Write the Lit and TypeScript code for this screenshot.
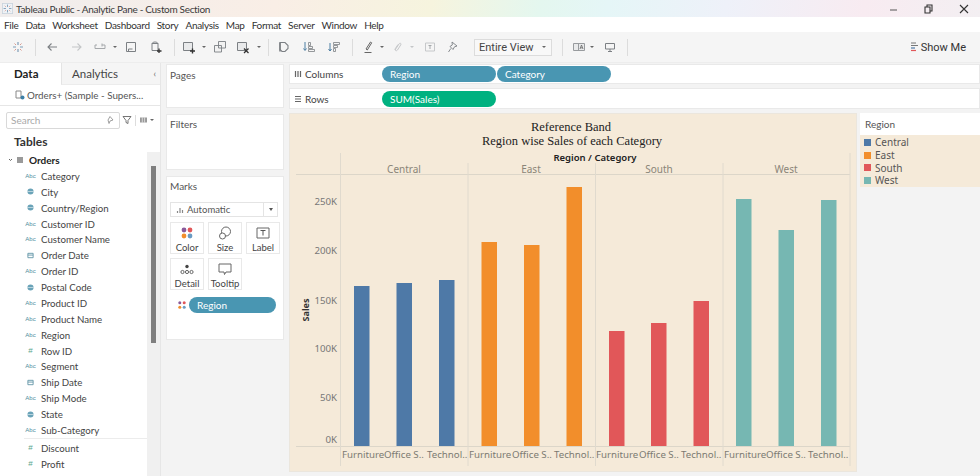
import { LitElement, html, css, svg } from "lit";
import { customElement } from "lit/decorators.js";

const G = "#7c8084";
const ic: Record<string, any> = {
  logo: svg`<g stroke="#7f9db8" stroke-width="1.2"><path d="M7 2v3M7 9v3M2 7h3M9 7h3"/></g><g stroke="#d99a8f" stroke-width="1"><path d="M3.5 3.5l1.5 1.5M9 9l1.5 1.5M10.5 3.5L9 5M5 9l-1.5 1.5"/></g>`,
  back: svg`<path d="M12 7H3M6.5 3.5L3 7l3.5 3.5" fill="none" stroke="${G}" stroke-width="1.1"/>`,
  fwd: svg`<path d="M2 7h9M7.5 3.5L11 7l-3.5 3.5" fill="none" stroke="#c4c6c8" stroke-width="1.1"/>`,
  loop: svg`<path d="M9 5h3v3.500H2V5h2M9 3.500V6.500" fill="none" stroke="#a5a8ab" stroke-width="1"/>`,
  save: svg`<path d="M2.500 2.500h9v9h-9zM4.500 11.500V9h4" fill="none" stroke="${G}" stroke-width="1"/>`,
  newds: svg`<path d="M3 3.500h6v7H3zM3 3.500c1-2 5-2 6 0" fill="none" stroke="${G}"/><path d="M10 8.500v4.500M8 11h4.500" stroke="#333" stroke-width="1.300"/>`,
  sheet: svg`<path d="M1.500 2.500h9v8h-9z" fill="#e9eaeb" stroke="${G}"/><path d="M10.500 8.500v5M8 11h5" stroke="#333" stroke-width="1.400"/>`,
  dup: svg`<path d="M5.500 1.500h7v6.500h-7z M1.500 5.500h7v6.500h-7z" fill="#f2f2f2" stroke="${G}" stroke-width=".9"/>`,
  clear: svg`<path d="M1.500 2.500h9v8h-9z" fill="#e9eaeb" stroke="${G}"/><path d="M8 8.500l4.500 4.500M12.500 8.500L8 13" stroke="#333" stroke-width="1.300"/>`,
  swap: svg`<path d="M3 2.500h5l3 3v3l-3 3H5l-2-2z" fill="none" stroke="${G}" stroke-width="1.100"/><path d="M3 2.500v9" stroke="${G}" stroke-width="1.600"/>`,
  sort1: svg`<path d="M3 2v8M1.500 8.500L3 10.500 4.500 8.500" fill="none" stroke="#4d7ea3"/><path d="M6.500 2.500h2v3h-2zM6.500 6.500h4v2h-4zM6.500 9.500h6v2h-6z" fill="none" stroke="${G}" stroke-width=".8"/>`,
  sort2: svg`<path d="M3 3v8M1.500 9L3 11 4.500 9" fill="none" stroke="#4d7ea3"/><path d="M6.500 2.500h6v2h-6zM6.500 5.500h4v2h-4zM6.500 8.500h2v3h-2z" fill="none" stroke="${G}" stroke-width=".8"/>`,
  pen: svg`<path d="M5 9l4.500-7 1.200.800L6.300 10zM3.500 12.500h7" fill="none" stroke="#666" stroke-width="1"/>`,
  clip: svg`<path d="M5 10l4-6c1-1.500 2.500-.500 1.800.800L7.500 10c-1 1.500-3 .500-2.300-1.200L8 4.500" fill="none" stroke="#c6c8ca" stroke-width="1"/>`,
  tbox: svg`<path d="M2.500 3h9v8h-9z" fill="none" stroke="#c6c8ca"/><path d="M5.500 5.500h3M7 5.500v3.500" stroke="#a5a8ab"/>`,
  pin: svg`<path d="M6 2l5 4-2.500.800-1.500 2.700-3-3 2.300-1.500zM4.800 8.500L2.500 12" fill="none" stroke="${G}" stroke-width=".9"/>`,
  fit: svg`<path d="M1.500 3.500h11v7h-11z" fill="#e9eaeb" stroke="#989b9e"/><path d="M6.500 3.500v7" stroke="#989b9e"/><path d="M8 9l1.500-4 1.500 4M8.600 7.800h1.800" fill="none" stroke="#666" stroke-width=".8"/>`,
  present: svg`<path d="M2.500 3.500h9v5.500h-9zM7 9v2.500M5 11.500h4" fill="none" stroke="${G}" stroke-width="1"/>`,
};

const tools: [number, string][] = [
  [18, "logo"], [35, "|"], [52, "back"], [77, "fwd"], [100, "loop"], [115, "."], [131, "save"], [156, "newds"], [174, "|"],
  [189, "sheet"], [204, "."], [220, "dup"], [243, "clear"], [259, "."], [268, "|"], [284, "swap"], [309, "sort1"], [334, "sort2"],
  [352, "|"], [368, "pen"], [382, "."], [397, "clip"], [412, ".l"], [430, "tbox"], [453, "pin"],
];
const tools2: [number, string][] = [[562, "|"], [579, "fit"], [592, "."], [610, "present"], [627, "|"]];

const fields: [string, string][] = [
  ["abc", "Category"], ["geo", "City"], ["geo", "Country/Region"], ["abc", "Customer ID"], ["abc", "Customer Name"],
  ["cal", "Order Date"], ["abc", "Order ID"], ["geo", "Postal Code"], ["abc", "Product ID"], ["abc", "Product Name"],
  ["abc", "Region"], ["num", "Row ID"], ["abc", "Segment"], ["cal", "Ship Date"], ["abc", "Ship Mode"], ["geo", "State"], ["abc", "Sub-Category"],
];

const C = { c: "#4e79a7", e: "#f28e2b", s: "#e15759", w: "#76b7b2" };
const bars: [number, number, string][] = [
  [354, 286, C.c], [396.500, 283, C.c], [439, 280, C.c],
  [481.500, 242, C.e], [524, 245, C.e], [566.500, 187, C.e],
  [609, 331, C.s], [651, 323, C.s], [693.500, 301, C.s],
  [736, 199, C.w], [778.500, 230, C.w], [821, 200, C.w],
];
const xl: [number, string][] = [
  [342, "Furniture"], [384, "Office S.."], [427, "Technol.."], [469, "Furniture"], [512, "Office S.."], [554, "Technol.."],
  [596, "Furniture"], [639, "Office S.."], [681, "Technol.."], [724, "Furniture"], [766, "Office S.."], [808, "Technol.."],
];

@customElement("app-root")
export class AppRoot extends LitElement {
  static styles = css`
    :host { display: block; width: 980px; height: 476px; overflow: hidden; background: #f3f3f3; font-family: Lato, "Noto Sans", sans-serif; color: #333; }
    .title { height: 17px; display: flex; align-items: center; padding-left: 2px; gap: 3px; font-size: 10px; letter-spacing: -.32px; color: #3a3a3a; font-family: Lato, sans-serif;
      background: linear-gradient(100deg, #f0eded 0%, #f9eee6 28%, #f6f4de 44%, #e4f7ef 55%, #e5f6f7 62%, #eef1f9 74%, #f8ebf1 88%, #f3eff2 100%); }
    .title svg { width: 11px; height: 11px; }
    .winbtns { margin-left: auto; display: flex; align-items: center; }
    .winbtns svg { width: 36px; height: 14px; }
    .menu { height: 15px; background: #fff; display: flex; align-items: center; gap: 7px; padding-left: 4px; font-size: 10px; letter-spacing: -.3px; color: #333; font-family: Lato, sans-serif; }
    .tool { height: 31px; display: flex; align-items: center; background: #f5f5f5; box-sizing: border-box; border-bottom: 1px solid #ededed; }
    .t { width: 14px; height: 14px; flex: none; }
    .sep { width: 1px; height: 17px; background: #dcdcdc; flex: none; }
    .dot { width: 6px; height: 6px; flex: none; display: flex; align-items: center; justify-content: center; }
    .dot::after { content: ""; border: 2px solid transparent; border-top: 2px solid #666; border-bottom: 0; }
    .dot.l::after { border-top-color: #c4c6c8; }
    .view { width: 78px; height: 17px; box-sizing: border-box; border: 1px solid #dcdcdc; background: #f8f8f8; margin-left: 14px; font-size: 11px; color: #444; display: flex; align-items: center; padding: 0 4px; justify-content: space-between; flex: none; font-family: Roboto, sans-serif; }
    .showme { margin-left: auto; margin-right: 14px; display: flex; align-items: center; gap: 3px; font-size: 11px; color: #333; font-family: Roboto, sans-serif; }
    .showme svg { width: 7px; height: 10px; }
    .main { display: grid; grid-template-columns: 161px 120px 1fr; gap: 0 4px; height: 413px; }
    .data { background: #fff; position: relative; overflow: hidden; border-right: 1px solid #e6e6e6; box-sizing: border-box; }
    .tabs { display: flex; height: 21px; font-size: 11.500px; align-items: center; }
    .tabs b { width: 61px; padding-left: 14px; box-sizing: border-box; color: #222; font-weight: 700; }
    .tabs span { flex: 1; height: 100%; background: #f5f5f5; display: flex; align-items: center; justify-content: space-between; padding: 0 4px 0 10px; border-left: 1px solid #e4e4e4; border-bottom: 1px solid #ececec; color: #444; }
    .tabs i { font-size: 9px; font-style: normal; color: #666; }
    .ds { height: 22px; display: flex; align-items: center; gap: 2px; padding-left: 15px; border-bottom: 1px solid #e6e6e6; font-size: 9.800px; color: #555; box-sizing: border-box; }
    .ds svg { width: 10px; height: 10px; }
    .searchrow { display: flex; align-items: center; margin-top: 5px; margin-left: 6px; height: 18px; gap: 0; }
    .search { width: 114px; height: 17px; box-sizing: border-box; border: 1px solid #d9d9d9; border-radius: 2px; font-size: 10px; color: #a9a9a9; padding: 0 4px; display: flex; align-items: center; justify-content: space-between; margin-right: 2px; }
    .search svg, .searchrow > svg { width: 10px; height: 10px; flex: none; }
    .vs { width: 1px; height: 11px; background: #ddd; margin: 0 3px; }
    .tables { font-weight: 700; font-size: 12px; color: #333; padding-left: 14px; margin-top: 4px; height: 18px; line-height: 18px; }
    .orders { display: flex; align-items: center; height: 17px; font-weight: 700; font-size: 10px; color: #222; padding-left: 8px; }
    .orders svg { width: 21px; height: 10px; }
    .list { width: 148px; }
    .f { height: 15.880px; display: flex; align-items: center; font-size: 9.700px; color: #444; }
    .fi { width: 41px; padding-left: 20px; box-sizing: border-box; flex: none; display: flex; justify-content: center; color: #4f8ea0; }
    .abc { font-size: 6px; font-family: "Liberation Sans", sans-serif; color: #4f8ea0; }
    .num { font-size: 8px; color: #58a58c; font-family: "Liberation Sans", sans-serif; }
    .fi svg { width: 7px; height: 7px; }
    .div { height: 1px; background: #ececec; margin: 0 0 1px 24px; }
    .track { position: absolute; right: 0; top: 89px; bottom: 0; width: 13px; background: #f0f0f0; }
    .thumb { position: absolute; left: 4px; top: 14px; width: 5px; height: 177px; background: #7f7f7f; }
    .mid { display: flex; flex-direction: column; gap: 6px; padding: 1px 1px 0 1px; }
    .card { background: #fff; border: 1px solid #e9e9e9; box-sizing: border-box; padding: 4px 3px; font-size: 10px; color: #555; }
    .pages { height: 44px; }
    .filters { height: 56px; padding-top: 3px; }
    .marks { height: 164px; display: flex; flex-direction: column; padding-top: 3px; }
    .auto { margin-top: 10px; height: 15px; width: 108px; box-sizing: border-box; border: 1px solid #e4e4e4; display: flex; align-items: center; font-size: 9.500px; color: #555; }
    .auto svg { width: 8px; height: 8px; margin: 0 3px 0 5px; }
    .auto span { flex: 1; }
    .auto i { width: 13px; height: 100%; border-left: 1px solid #e4e4e4; display: flex; align-items: center; justify-content: center; }
    .auto i::after { content: ""; border: 2px solid transparent; border-top: 3px solid #555; border-bottom: 0; }
    .mgrid { display: grid; grid-template-columns: repeat(3, 34px); gap: 4px; margin-top: 5px; }
    .mb { height: 32px; border: 1px solid #e9e9e9; box-sizing: border-box; display: flex; flex-direction: column; align-items: center; font-size: 9.500px; color: #444; padding-top: 3px; gap: 2px; line-height: 11px; }
    .mb svg { width: 14px; height: 14px; flex: none; }
    .mp { display: flex; align-items: center; gap: 3px; margin-top: 7px; padding-left: 8px; }
    .mp svg { width: 8px; height: 8px; }
    .pill { background: #4996b2; color: #fff; border-radius: 8px; height: 16px; display: flex; align-items: center; padding-left: 8px; box-sizing: border-box; font-size: 10px; flex: none; }
    .pill.w86 { width: 87px; }
    .pill.w114 { width: 114px; }
    .pill.g { background: #00b180; }
    .right { display: grid; grid-template-columns: 1fr 120px; grid-template-rows: 20px 21px 1fr; gap: 4px 3px; padding-top: 1px; height: 412px; }
    .shelf { grid-column: 1 / 3; background: #fff; border: 1px solid #e9e9e9; box-sizing: border-box; display: flex; align-items: center; font-size: 10px; color: #444; gap: 1px; }
    .shelf svg { width: 8px; height: 8px; margin: 0 2px 0 4px; }
    .shelf .lb { width: 76px; }
    .sview { background: #f5ead9; border: 1px solid #ebe6dd; box-sizing: border-box; height: 359px; }
    .sview svg { display: block; }
    .legend { height: 74px; align-self: start; font-size: 10px; color: #555; font-family: "Noto Sans", sans-serif; }
    .lh { background: #fff; height: 22px; padding-left: 5px; display: flex; align-items: center; font-family: Lato, sans-serif; }
    .lb2 { background: #f5ead9; height: 52px; padding: 1px 0 0 4px; box-sizing: border-box; }
    .lr { display: flex; align-items: center; gap: 4px; height: 12.700px; }
    .sw { width: 7px; height: 7px; }
    text.t1 { font-family: "Liberation Serif", serif; font-size: 12.500px; fill: #222; text-anchor: middle; }
    text.h { font-family: "Noto Sans", sans-serif; font-size: 9.500px; font-weight: 600; fill: #222; text-anchor: middle; }
    text.r { font-family: "Noto Sans", sans-serif; font-size: 10px; fill: #8a8578; text-anchor: middle; }
    text.y { font-family: "Noto Sans", sans-serif; font-size: 9.700px; fill: #777; text-anchor: end; }
    text.x { font-family: "Noto Sans", sans-serif; font-size: 9.700px; fill: #7c7a72; }
    text.s { font-family: "Noto Sans", sans-serif; font-size: 9px; font-weight: 700; fill: #333; text-anchor: middle; }
  `;

  private tb(list: [number, string][], start: number) {
    let x = start;
    return list.map(([c, k]) => {
      const w = k === "|" ? 1 : k[0] === "." ? 6 : 14;
      const m = c - w / 2 - x;
      x = c - w / 2 + w;
      const st = `margin-left:${m}px`;
      if (k === "|") return html`<div class="sep" style=${st}></div>`;
      if (k === ".") return html`<div class="dot" style=${st}></div>`;
      if (k === ".l") return html`<div class="dot l" style=${st}></div>`;
      return html`<svg class="t" viewBox="0 0 14 14" style=${st}>${ic[k]}</svg>`;
    });
  }

  private fi(t: string) {
    if (t === "abc") return html`<span class="abc">Abc</span>`;
    if (t === "num") return html`<span class="num">#</span>`;
    if (t === "geo") return html`<svg viewBox="0 0 8 8"><circle cx="4" cy="4" r="3.500" fill="#6aa3b8"/><path d="M.5 4h7" stroke="#fff" stroke-width=".6"/></svg>`;
    return html`<svg viewBox="0 0 8 8"><path d="M1 1.500h6v5H1z" fill="none" stroke="#5f93a6"/><path d="M1 3.500h6" stroke="#5f93a6"/></svg>`;
  }

  private chart() {
    return svg`<svg width="566" height="357" viewBox="290 114 566 357">
      <text class="t1" x="571" y="131">Reference Band</text>
      <text class="t1" x="572" y="145">Region wise Sales of each Category</text>
      <text class="h" x="595" y="161">Region / Category</text>
      ${[["Central", 404], ["East", 531], ["South", 659], ["West", 786]].map(([t, x]) => svg`<text class="r" x="${x}" y="172.500">${t}</text>`)}
      <path d="M296 174.500H850M296 446.500H850" stroke="#dcd6c9" fill="none"/>
      <path d="M340.500 153V466M468 163V466M595.500 163V466M723 163V466M850 153V466" stroke="#e0dace" fill="none"/>
      ${[["250K", 205], ["200K", 254], ["150K", 303.500], ["100K", 352], ["50K", 401], ["0K", 443]].map(([t, y]) => svg`<text class="y" x="337" y="${y}">${t}</text>`)}
      <text class="s" transform="translate(309 310) rotate(-90)">Sales</text>
      ${bars.map(([x, y, c]) => svg`<rect x="${x}" y="${y}" width="15.500" height="${446 - y}" fill="${c}"/>`)}
      ${xl.map(([x, t]) => svg`<text class="x" x="${x}" y="458">${t}</text>`)}
    </svg>`;
  }

  render() {
    return html`
      <div class="title">
        <svg viewBox="0 0 14 14"><rect x=".5" y=".5" width="13" height="13" fill="#eef2f6" stroke="#c8d2dc"/>${ic.logo}</svg>
        <span>Tableau Public - Analytic Pane - Custom Section</span>
        <div class="winbtns">
          <svg viewBox="0 0 36 14"><path d="M18 8h7" stroke="#555"/></svg>
          <svg viewBox="0 0 36 14"><path d="M17 5h5v6h-5zM19 5V3h5v6h-2" fill="none" stroke="#333" stroke-width="1.100"/></svg>
          <svg viewBox="0 0 36 14"><path d="M16 3l8 8M24 3l-8 8" stroke="#333" stroke-width="1.100"/></svg>
        </div>
      </div>
      <div class="menu">${["File", "Data", "Worksheet", "Dashboard", "Story", "Analysis", "Map", "Format", "Server", "Window", "Help"].map((m) => html`<span>${m}</span>`)}</div>
      <div class="tool">
        ${this.tb(tools, 0)}
        <div class="view"><span>Entire View</span><div class="dot"></div></div>
        ${this.tb(tools2, 552)}
        <div class="showme"><svg viewBox="0 0 7 10"><path d="M0 1h5M0 3.500h7" stroke="#777" stroke-width="1.200"/><path d="M0 6h4" stroke="#4e79a7" stroke-width="1.200"/><path d="M0 8.500h5" stroke="#e15759" stroke-width="1.200"/></svg>Show Me</div>
      </div>
      <div class="main">
        <div class="data">
          <div class="tabs"><b>Data</b><span>Analytics<i>‹</i></span></div>
          <div class="ds"><svg viewBox="0 0 10 10"><path d="M1 1h5v7H1z" fill="none" stroke="#888"/><circle cx="7.500" cy="7.500" r="2" fill="#3d7fa6"/></svg>Orders+ (Sample - Supers...</div>
          <div class="searchrow">
            <div class="search">Search<svg viewBox="0 0 10 10"><path d="M5 1.500L8 5 5 6 4 8.500 3 5z" fill="none" stroke="#888" stroke-width=".8"/></svg></div>
            <svg viewBox="0 0 10 10"><path d="M1 1.500h8L6 5.500v3L4 7.500v-2z" fill="none" stroke="#666" stroke-width=".9"/></svg>
            <div class="vs"></div>
            <svg viewBox="0 0 10 10"><path d="M1 2.500h7v5H1z" fill="#999"/><path d="M3.300 2.500v5M5.600 2.500v5" stroke="#fff" stroke-width=".6"/></svg>
            <div class="dot"></div>
          </div>
          <div class="tables">Tables</div>
          <div class="orders"><svg viewBox="0 0 21 10"><path d="M1 4l1.500 1.500L4 4" fill="none" stroke="#666"/><rect x="9" y="2" width="6" height="6" fill="#9a9a9a"/></svg>Orders</div>
          <div class="list">
            ${fields.map(([t, n]) => html`<div class="f"><span class="fi">${this.fi(t)}</span>${n}</div>`)}
            <div class="div"></div>
            <div class="f"><span class="fi"><span class="num">#</span></span>Discount</div>
            <div class="f"><span class="fi"><span class="num">#</span></span>Profit</div>
          </div>
          <div class="track"><div class="thumb"></div></div>
        </div>
        <div class="mid">
          <div class="card pages">Pages</div>
          <div class="card filters">Filters</div>
          <div class="card marks">
            <span>Marks</span>
            <div class="auto"><svg viewBox="0 0 8 8"><path d="M1.500 7V5M4 7V2M6.500 7V4" stroke="#888" stroke-width="1.200"/></svg><span>Automatic</span><i></i></div>
            <div class="mgrid">
              <div class="mb"><svg viewBox="0 0 14 14"><circle cx="4" cy="4" r="2.400" fill="#8a5a9a"/><circle cx="10" cy="4" r="2.400" fill="#e15759"/><circle cx="4" cy="10" r="2.400" fill="#f28e2b"/><circle cx="10" cy="10" r="2.400" fill="#6a9bc3"/></svg>Color</div>
              <div class="mb"><svg viewBox="0 0 14 14"><circle cx="8" cy="5.500" r="4.500" fill="none" stroke="#666"/><circle cx="4.500" cy="10" r="3" fill="#fff" stroke="#666"/></svg>Size</div>
              <div class="mb"><svg viewBox="0 0 14 14"><path d="M1 2h12v10H1z" fill="none" stroke="#666"/><path d="M4.500 4.500h5M7 4.500v5" stroke="#555"/></svg>Label</div>
              <div class="mb"><svg viewBox="0 0 14 14"><circle cx="7" cy="4.500" r="1.700" fill="#444"/><circle cx="2.500" cy="10" r="1.600" fill="none" stroke="#666"/><circle cx="7" cy="10" r="1.600" fill="none" stroke="#666"/><circle cx="11.500" cy="10" r="1.600" fill="none" stroke="#666"/></svg>Detail</div>
              <div class="mb"><svg viewBox="0 0 14 14"><path d="M1 2h12v8H8l-1.500 2.500L6 10H1z" fill="none" stroke="#666"/></svg>Tooltip</div>
            </div>
            <div class="mp"><svg viewBox="0 0 8 8"><circle cx="1.800" cy="1.800" r="1.500" fill="#8a5a9a"/><circle cx="6.200" cy="1.800" r="1.500" fill="#e15759"/><circle cx="1.800" cy="6.200" r="1.500" fill="#f28e2b"/><circle cx="6.200" cy="6.200" r="1.500" fill="#6a9bc3"/></svg><div class="pill w86">Region</div></div>
          </div>
        </div>
        <div class="right">
          <div class="shelf"><svg viewBox="0 0 8 8"><path d="M1.500 1v6M4 1v6M6.500 1v6" stroke="#666" stroke-width="1.200"/></svg><span class="lb">Columns</span>
            <div class="pill w114">Region</div><div class="pill w114">Category</div></div>
          <div class="shelf"><svg viewBox="0 0 8 8"><path d="M1 1.500h6M1 4h6M1 6.500h6" stroke="#666" stroke-width="1.200"/></svg><span class="lb">Rows</span>
            <div class="pill w114 g">SUM(Sales)</div></div>
          <div class="sview">${this.chart()}</div>
          <div class="legend">
            <div class="lh">Region</div>
            <div class="lb2">
              ${[["Central", C.c], ["East", C.e], ["South", C.s], ["West", C.w]].map(([t, c]) => html`<div class="lr"><div class="sw" style="background:${c}"></div>${t}</div>`)}
            </div>
          </div>
        </div>
      </div>
    `;
  }
}
